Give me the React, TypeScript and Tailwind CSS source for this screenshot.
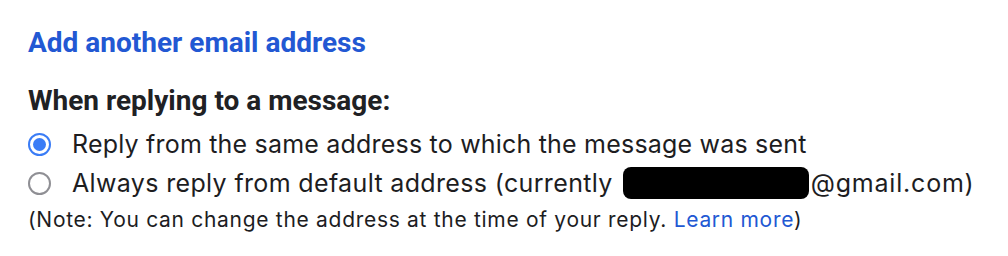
import React, { useState } from 'react';

const body = { fontFamily: 'Inter, "Liberation Sans", Arial, sans-serif' };
const head = { fontFamily: 'Roboto, "Liberation Sans", Arial, sans-serif' };

function Radio({ checked }: { checked: boolean }) {
  return checked ? (
    <span className="flex h-[23px] w-[23px] shrink-0 items-center justify-center rounded-full border-[2.5px] border-[#3a7cf6] bg-white">
      <span className="h-[13px] w-[13px] rounded-full bg-[#3a7cf6]" />
    </span>
  ) : (
    <span className="h-[23px] w-[23px] shrink-0 rounded-full border-2 border-[#8f8f94] bg-white" />
  );
}

export default function App() {
  const [choice, setChoice] = useState(0);

  return (
    <div className="h-[256px] w-[1008px] bg-white pl-[28px] pt-[26px] text-[#202124]">
      <a
        href="#"
        style={head}
        className="block text-[28px] font-bold leading-[34px] text-[#2258d3]"
      >
        Add another email address
      </a>

      <div style={head} className="mt-[24px] text-[28px] font-bold leading-[34px]">
        When replying to a message:
      </div>

      <div
        style={body}
        className="mt-[6px] flex flex-col text-[25px] leading-[38px] tracking-[0.2px] text-[#1d1d1f]"
      >
        <label className="flex h-[40px] items-center gap-[21px]" onClick={() => setChoice(0)}>
          <Radio checked={choice === 0} />
          <span>Reply from the same address to which the message was sent</span>
        </label>
        <label className="flex h-[38px] items-center gap-[21px]" onClick={() => setChoice(1)}>
          <Radio checked={choice === 1} />
          <span className="flex items-center tracking-[0.35px]">
            Always reply from default address (currently
            <span className="ml-[10px] mr-[2px] inline-block h-[32px] w-[186px] rounded-[8px] bg-black" />
            <span className="tracking-[0.8px]">@gmail.com)</span>
          </span>
        </label>
      </div>

      <p
        style={body}
        className="mt-[3px] text-[21px] leading-[30px] tracking-[0.7px] text-[#1d1d1f]"
      >
        (Note: You can change the address at the time of your reply.{' '}
        <a href="#" className="text-[#2258d3]">
          Learn more
        </a>
        )
      </p>
    </div>
  );
}
